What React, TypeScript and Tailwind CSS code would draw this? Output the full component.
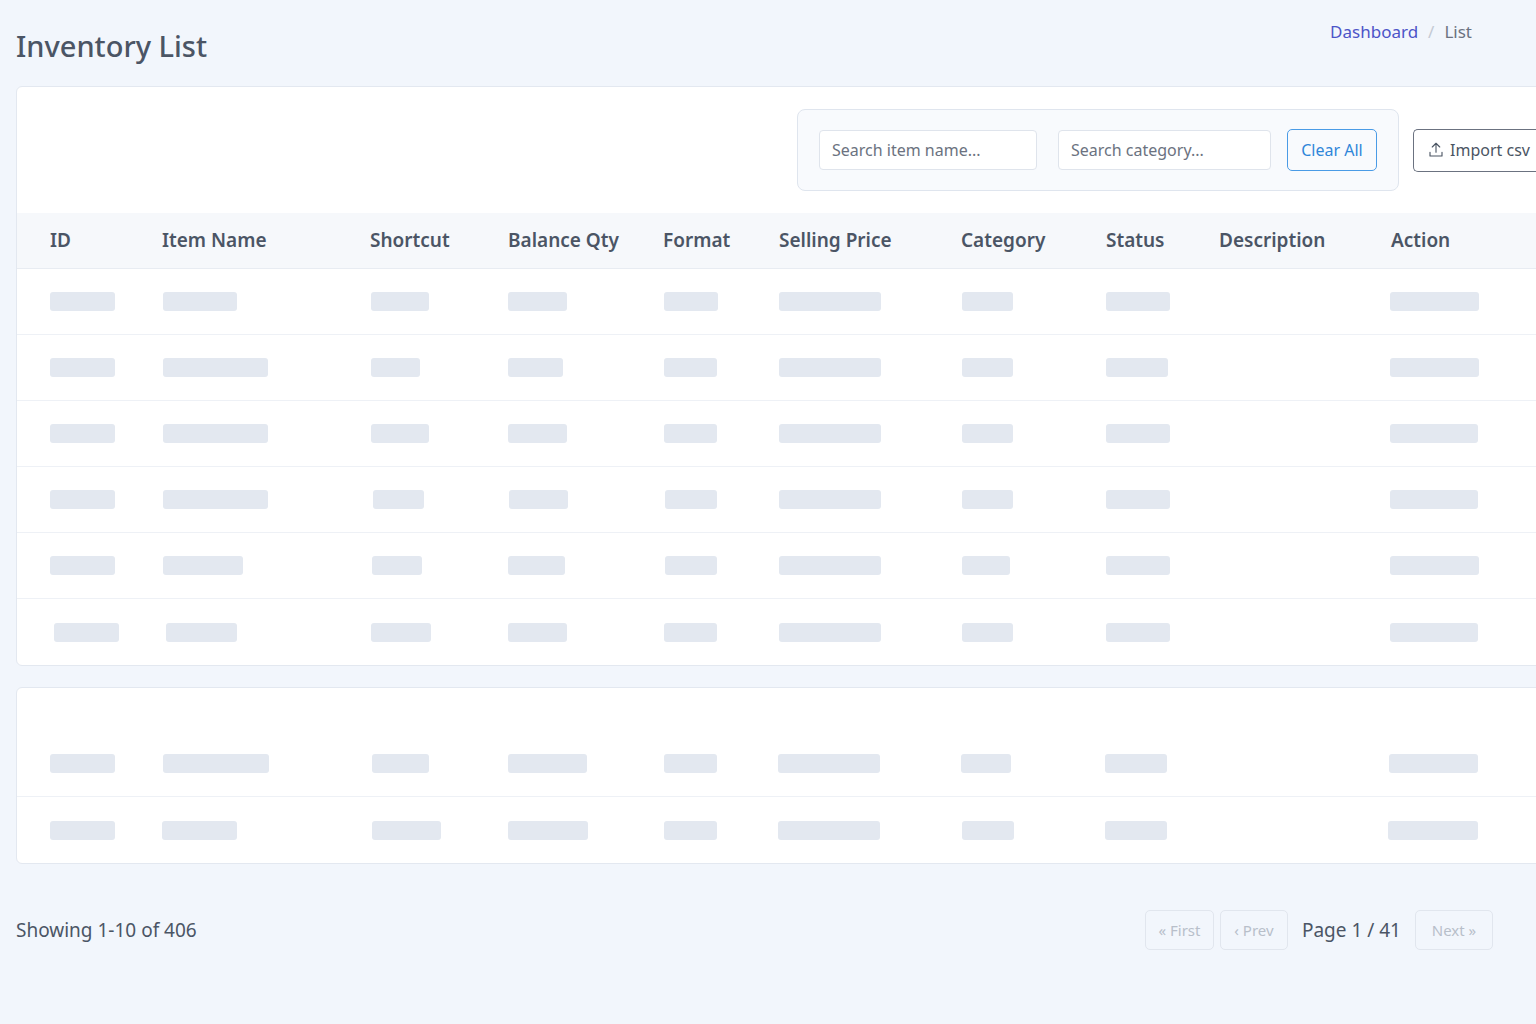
import React from "react";

const cols = [112, 208, 138, 155, 116, 182, 145, 113, 172, 120];
const heads = ["ID","Item Name","Shortcut","Balance Qty","Format","Selling Price","Category","Status","Description","Action"];
type B = [number, number] | null;
const rows: B[][] = [
  [[0,65],[1,74],[1,58],[0,59],[1,54],[0,102],[1,51],[0,64],null,[-1,89]],
  [[0,65],[1,105],[1,49],[0,55],[1,53],[0,102],[1,51],[0,62],null,[-1,89]],
  [[0,65],[1,105],[1,58],[0,59],[1,53],[0,102],[1,51],[0,64],null,[-1,88]],
  [[0,65],[1,105],[3,51],[1,59],[2,52],[0,102],[1,51],[0,64],null,[-1,88]],
  [[0,65],[1,80],[2,50],[0,57],[2,52],[0,102],[1,48],[0,64],null,[-1,89]],
  [[4,65],[4,71],[1,60],[0,59],[1,53],[0,102],[1,51],[0,64],null,[-1,88]],
];
const rows2: B[][] = [
  [[0,65],[1,106],[2,57],[0,79],[1,53],[-1,102],[0,50],[-1,62],null,[-2,89]],
  [[0,65],[0,75],[2,69],[0,80],[1,53],[-1,102],[1,52],[-1,62],null,[-3,90]],
];

function Row({ r, last, h = 66 }: { r: B[]; last?: boolean; h?: number }) {
  return (
    <div className={`flex items-center pl-[33px] ${last ? "" : "border-b border-[#eef1f6]"}`} style={{ height: h }}>
      {cols.map((w, i) => (
        <div key={i} className="shrink-0" style={{ width: w }}>
          {r[i] && <div className="h-[19px] rounded-[3px] bg-[#e3e8f0]" style={{ marginLeft: r[i]![0], width: r[i]![1] }} />}
        </div>
      ))}
    </div>
  );
}

export default function App() {
  return (
    <div className="w-[1536px] h-[1024px] overflow-hidden bg-[#f2f6fc] text-[#4a5568]" style={{ fontFamily: '"Noto Sans", "Open Sans", sans-serif' }}>
      <div className="flex justify-between pl-4 pr-[64px] pt-[18px]">
        <h1 className="text-[29px] font-medium text-[#4b5565] mt-[8px] leading-[40px]">Inventory List</h1>
        <div className="text-[17px] mt-[1px]">
          <span className="text-[#4c54c8]">Dashboard</span>
          <span className="text-[#c4cad4] mx-[10px]">/</span>
          <span className="text-[#6b7280]">List</span>
        </div>
      </div>
      <div className="ml-4 mt-[20px] w-[1540px] bg-white border border-[#e3e8f0] rounded-[6px]">
        <div className="flex justify-end items-center h-[126px] pr-[19px] gap-[14px]">
          <div className="flex items-center gap-[16px] h-[82px] px-[21px] border border-[#dfe5ee] rounded-[8px] bg-[#f8fafd]">
            <div className="w-[218px] h-[40px] bg-white border border-[#dfe4ec] rounded-[4px] flex items-center pl-3 text-[16px] text-[#6b7280]">Search item name...</div>
            <div className="ml-[5px] w-[213px] h-[40px] bg-white border border-[#dfe4ec] rounded-[4px] flex items-center pl-3 text-[16px] text-[#6b7280]">Search category...</div>
            <div className="w-[90px] h-[42px] border border-[#4a9be6] rounded-[5px] flex items-center justify-center text-[16px] text-[#2f86d9]">Clear All</div>
          </div>
          <div className="w-[123px] h-[43px] border border-[#6b7280] border-r-0 rounded-l-[5px] flex items-center pl-[13px] gap-[5px] text-[16px] text-[#4b5563] whitespace-nowrap">
            <svg width="18" height="18" viewBox="0 0 24 24" fill="none" stroke="currentColor" strokeWidth="1.5" strokeLinecap="round" strokeLinejoin="round"><path d="M12 15V3M7 8l5-5 5 5M4 15v5h16v-5"/></svg>
            Import csv
          </div>
        </div>
        <div className="flex items-center h-[56px] pl-[33px] bg-[#f6f8fb] border-b border-[#e8ecf2] text-[19px] font-semibold text-[#4b5565]">
          {cols.map((w, i) => <div key={i} className="shrink-0" style={{ width: w }}>{heads[i]}</div>)}
        </div>
        {rows.map((r, i) => <Row key={i} r={r} last={i === rows.length - 1} />)}
      </div>
      <div className="ml-4 mt-[21px] w-[1540px] bg-white border border-[#e3e8f0] rounded-[6px] pt-[43px]">
        <Row r={rows2[0]} h={66} />
        <Row r={rows2[1]} last h={66} />
      </div>
      <div className="flex justify-between items-center pl-4 pr-[43px] mt-[46px]">
        <div className="text-[19px] text-[#4b5565]">Showing 1-10 of 406</div>
        <div className="flex items-center gap-[6px] text-[15px]">
          <div className="h-[40px] w-[69px] border border-[#e1e6ee] rounded-[5px] flex items-center justify-center text-[#b8bfca]">« First</div>
          <div className="h-[40px] w-[68px] border border-[#e1e6ee] rounded-[5px] flex items-center justify-center text-[#b8bfca]">‹ Prev</div>
          <div className="text-[19px] text-[#4b5565] px-[8px]">Page 1 / 41</div>
          <div className="h-[40px] w-[78px] border border-[#e1e6ee] rounded-[5px] flex items-center justify-center text-[#b8bfca]">Next »</div>
        </div>
      </div>
    </div>
  );
}
